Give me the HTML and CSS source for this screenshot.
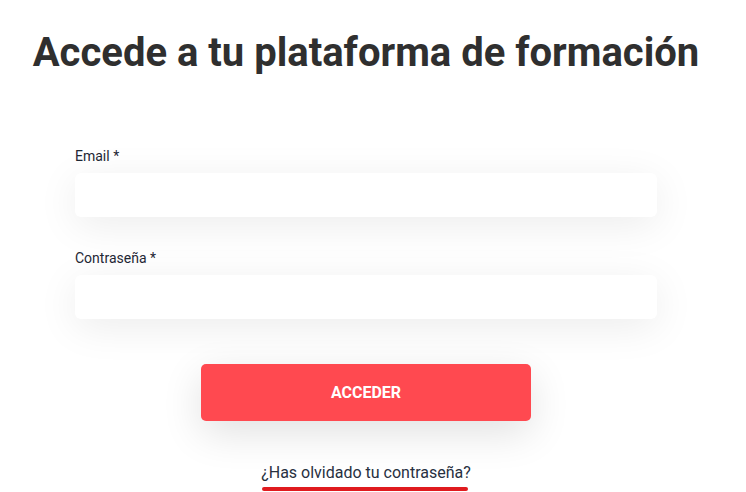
FILE: index.html
```html
<!DOCTYPE html>
<html lang="es">
<head>
    <meta charset="UTF-8">
    <meta name="viewport" content="width=device-width, initial-scale=1.0">
    <title>Acceso - Plataforma de formación</title>
    <link rel="stylesheet" href="styles.css">
</head>
<body>
    <!-- Login section -->
    <div class="page">
        <h1 class="title">Accede a tu plataforma de formación</h1>

        <form class="login-form">
            <div class="field">
                <label for="email">Email *</label>
                <input type="text" id="email" />
            </div>
            <div class="field">
                <label for="password">Contraseña *</label>
                <input type="password" id="password" />
            </div>
            <button type="button" class="submit">ACCEDER</button>
        </form>

        <a class="forgot" href="#">¿Has olvidado tu contraseña?</a>
    </div>
</body>
</html>
```

FILE: styles.css
```css
/* Basic styles for the page */
body {
    margin: 0;
    background-color: #ffffff;
    font-family: Roboto, "Liberation Sans", Arial, sans-serif;
    color: #333333;
}

.page {
    width: 732px;
    display: flex;
    flex-direction: column;
    align-items: center;
}

.title {
    font-size: 40px;
    font-weight: 700;
    margin: 29px 0 0;
    line-height: 48px;
    color: #2f2f2f;
}

/* Form */
.login-form {
    width: 582px;
    margin-top: 70px;
    display: flex;
    flex-direction: column;
}

.field {
    display: flex;
    flex-direction: column;
    margin-bottom: 32px;
}

.field label {
    font-size: 14px;
    line-height: 18px;
    color: #1e2735;
    margin-bottom: 8px;
}

.field input {
    height: 44px;
    border: none;
    border-radius: 6px;
    background: #ffffff;
    box-shadow: 0 8px 40px rgba(0, 0, 0, 0.08);
    padding: 0 12px;
    outline: none;
}

.submit {
    align-self: center;
    width: 330px;
    height: 57px;
    margin-top: 13px;
    border: none;
    border-radius: 5px;
    background-color: #ff4950;
    color: #ffffff;
    font-family: Roboto, "Liberation Sans", Arial, sans-serif;
    font-size: 16px;
    font-weight: 700;
    box-shadow: 0 12px 40px rgba(0, 0, 0, 0.12);
    cursor: pointer;
}

/* Forgot password link with red bar under it */
.forgot {
    position: relative;
    margin-top: 42px;
    font-size: 16px;
    line-height: 20px;
    color: #27303f;
    text-decoration: none;
    padding-bottom: 8px;
}

.forgot::after {
    content: "";
    position: absolute;
    left: 1px;
    right: 3px;
    bottom: 0;
    height: 4px;
    border-radius: 2px;
    background-color: #e01b1f;
}
```
